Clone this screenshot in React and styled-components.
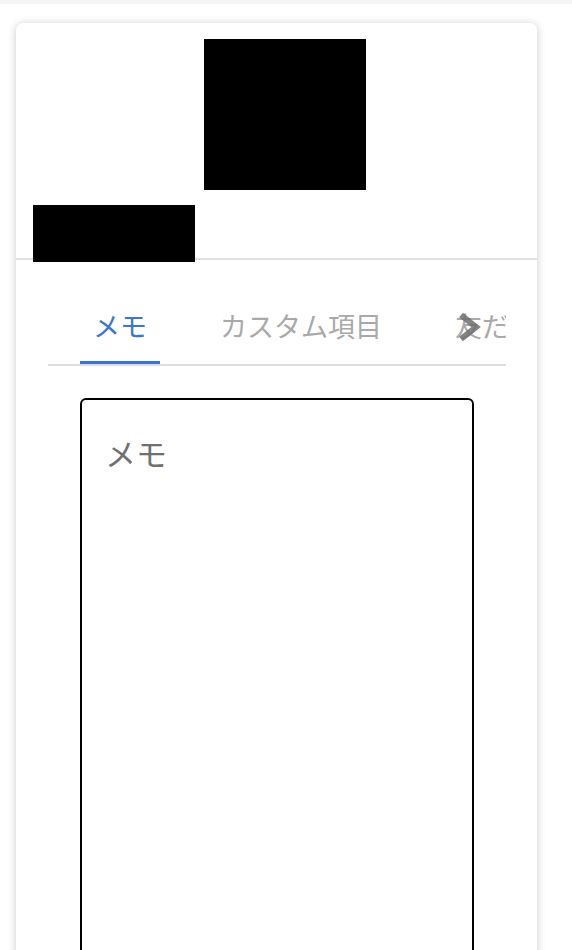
import React from 'react';
import styled, { createGlobalStyle } from 'styled-components';

const GlobalStyle = createGlobalStyle`
  html, body {
    margin: 0;
    padding: 0;
    background: #fff;
    font-family: "Noto Sans CJK JP", "Noto Sans", sans-serif;
  }
`;

const TopStrip = styled.div`
  height: 4px;
  background: #f6f6f6;
`;

const Card = styled.div`
  margin: 19px 35px 0 16px;
  background: #fff;
  border-radius: 7px;
  box-shadow: 0 1px 8px rgba(0, 0, 0, 0.22);
  padding-bottom: 40px;
`;

const Header = styled.div`
  display: flex;
  flex-direction: column;
  padding-top: 16px;
  border-bottom: 2px solid #e0e0e0;
`;

const Redacted = styled.div`
  position: relative;
  z-index: 1;
  background: #000;
  width: ${props => props.$w}px;
  height: ${props => props.$h}px;
  margin-left: ${props => props.$left}px;
  margin-top: ${props => props.$top || 0}px;
  margin-bottom: ${props => props.$bottom || 0}px;
`;

const TabBar = styled.div`
  position: relative;
  margin: 30px 31px 0 32px;
  border-bottom: 2px solid #dddddd;
`;

const Scroller = styled.div`
  display: flex;
  gap: 47px;
  padding-left: 32px;
  overflow: hidden;
`;

const Tab = styled.div`
  position: relative;
  flex-shrink: 0;
  box-sizing: border-box;
  height: 74px;
  padding: 0 13px 4px;
  display: flex;
  align-items: center;
  font-size: 27px;
  white-space: nowrap;
  color: ${props => (props.$active ? '#3b77cf' : '#a9a9a9')};

  &::after {
    content: '';
    display: ${props => (props.$active ? 'block' : 'none')};
    position: absolute;
    left: 0;
    right: 0;
    bottom: 0;
    height: 3px;
    background: #3a74cc;
  }
`;

const ScrollArrow = styled.svg`
  position: absolute;
  left: 409px;
  top: 22px;
  width: 24px;
  height: 30px;
  filter: blur(0.6px);
`;

const MemoField = styled.textarea`
  display: block;
  box-sizing: border-box;
  margin: 32px 0 0 64px;
  width: 394px;
  height: 620px;
  padding: 31px 23px;
  border: 2px solid #000;
  border-radius: 6px;
  resize: none;
  outline: none;
  font-family: "Noto Sans CJK JP", "Noto Sans", sans-serif;
  font-size: 31px;
  line-height: 1.4;
  color: #333;

  &::placeholder {
    color: #707070;
  }
`;

const tabs = ['メモ', 'カスタム項目', '友だち'];

export default function App() {
  return (
    <>
      <GlobalStyle />
      <TopStrip />
      <Card>
        <Header>
          <Redacted $w={162} $h={151} $left={188} />
          <Redacted $w={162} $h={57} $left={17} $top={15} $bottom={-4} />
        </Header>
        <TabBar>
          <Scroller>
            {tabs.map((t, i) => (
              <Tab key={t} $active={i === 0}>{t}</Tab>
            ))}
          </Scroller>
          <ScrollArrow viewBox="0 0 24 30">
            <polyline
              points="4,3 19,15 4,27"
              fill="none"
              stroke="rgba(110,110,110,0.85)"
              strokeWidth="6"
              strokeLinejoin="miter"
            />
          </ScrollArrow>
        </TabBar>
        <MemoField placeholder="メモ" />
      </Card>
    </>
  );
}
